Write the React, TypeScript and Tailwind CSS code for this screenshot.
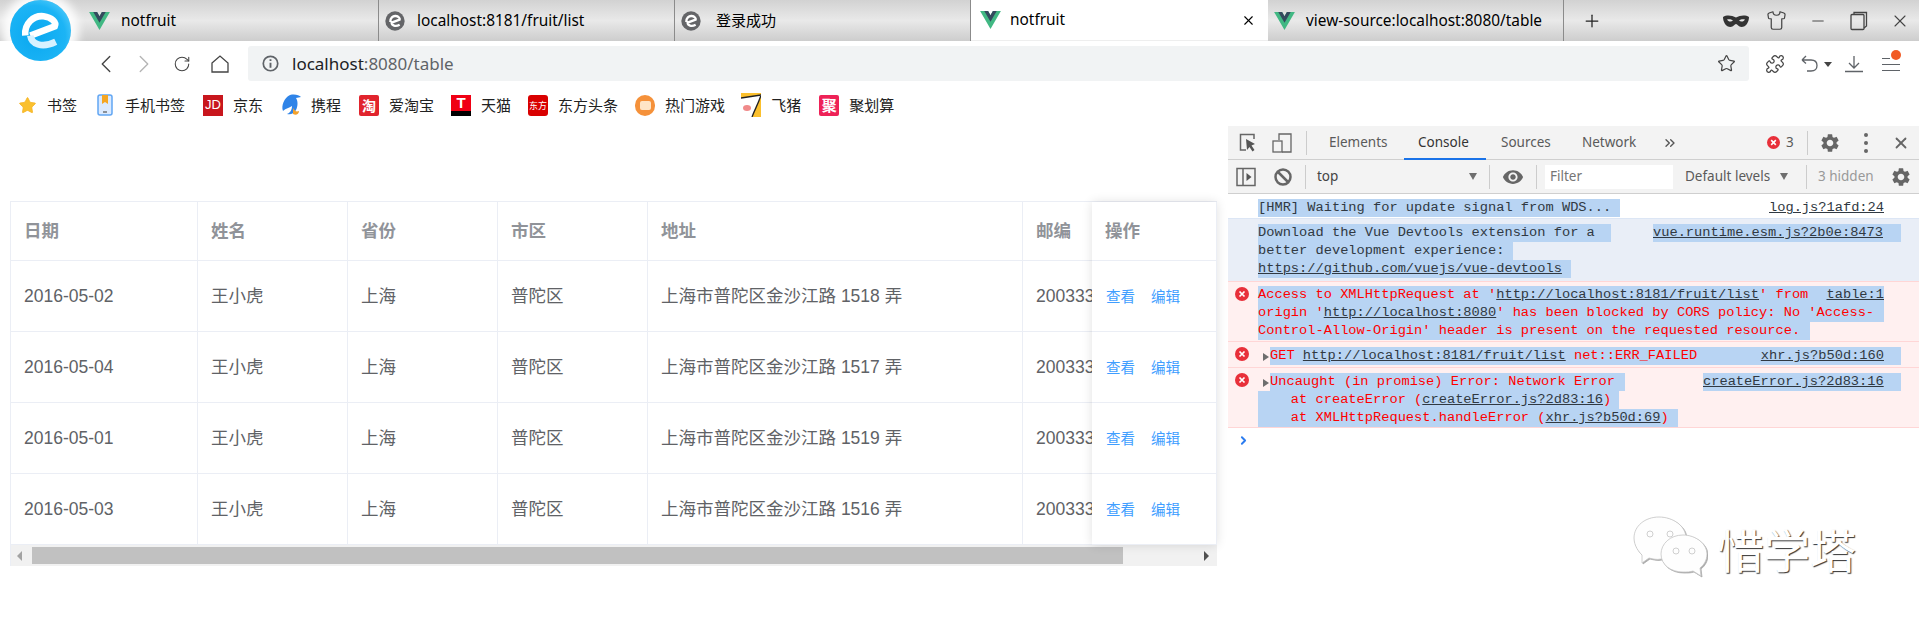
import React from "react";
import { ChevronLeft, ChevronRight, ChevronsRight, Minus, Plus, Puzzle, RotateCw, Shirt, Star, X } from "lucide-react";
import { MdSettings, MdVisibility } from "react-icons/md";

const Vue = () => (
  <svg viewBox="0 0 261.76 226.69" className="w-[21px] h-[18px] shrink-0">
    <path d="M161.096.001l-30.225 52.351L100.647.001H-.005l130.877 226.688L261.749.001z" fill="#41b883" />
    <path d="M161.096.001l-30.225 52.351L100.647.001H52.346l78.526 136.01L209.398.001z" fill="#34495e" />
  </svg>
);

const SmallE = () => (
  <svg viewBox="0 0 60 60" className="w-[20px] h-[20px] shrink-0">
    <circle cx="30" cy="30" r="29" fill="#646568" />
    <path d="M16 33C15 21 24 14 32 15C41 16 45 22 44 26L20 35C20 43 31 48 44 41" fill="none" stroke="#fff" strokeWidth="7" />
  </svg>
);

function Tab({ icon, label, active, cjk }: { icon: React.ReactNode; label: string; active?: boolean; cjk?: boolean }) {
  return (
    <div className={active ? "flex items-center w-[297px] h-[41px] pl-[9px] bg-white border-b border-[#eeeeee]" : "flex items-center w-[296px] h-[41px] pl-[6px] border-r border-[#8b8b8b]"}>
      <span className="w-[20px] flex justify-center">{icon}</span>
      <span className={cjk ? "ml-[15px] text-[15px] text-black" : active ? "ml-[10px] text-[15.4px] text-black" : "ml-[12px] text-[15.4px] text-black"}>{label}</span>
      {active && <X className="ml-auto mr-[12px] w-[15px] h-[15px] text-black" strokeWidth={1.8} />}
    </div>
  );
}

const Mask = () => (
  <svg viewBox="0 0 26 12" className="w-[26px] h-[12px]">
    <path fillRule="evenodd" d="M0 2C4 -.5 9 .5 13 2.5C17 .5 22 -.5 26 2C26 7 23 12 18.5 12C15.500 12 14.500 9 13 9C11.500 9 10.500 12 7.500 12C3 12 0 7 0 2ZM4 4.500C5 6.500 8 7.500 10 5.500C8 4 6 4 4 4.500ZM22 4.500C21 6.500 18 7.500 16 5.500C18 4 20 4 22 4.500Z" fill="#333" />
  </svg>
);

const Restore = () => (
  <svg viewBox="0 0 18 20" className="w-[18px] h-[20px]" fill="none" stroke="#444" strokeWidth="1.3">
    <path d="M4 3V1.500H16.500V15L14 17" />
    <rect x="1" y="3.500" width="13" height="15" rx="1" />
  </svg>
);

function ChromeButton({ children, wide }: { children: React.ReactNode; wide?: boolean }) {
  return <div className={wide ? "flex items-center justify-center w-[56px] h-[41px]" : "flex items-center justify-center w-[41px] h-[41px]"}>{children}</div>;
}

function NavButton({ children }: { children: React.ReactNode }) {
  return <div className="flex items-center justify-center w-[38px] h-[46px]">{children}</div>;
}

const Info = () => (
  <svg viewBox="0 0 20 20" className="w-[17px] h-[17px] shrink-0" fill="none">
    <circle cx="10" cy="10" r="8.500" stroke="#5f6368" strokeWidth="2" />
    <path d="M10 9V15M10 5V7" stroke="#5f6368" strokeWidth="2.200" />
  </svg>
);

const HomeIcon = () => (
  <svg viewBox="0 0 18 18" className="w-[18px] h-[18px]" fill="none" stroke="#444" strokeWidth="1.300">
    <path d="M1 8L9 1L17 8V17H1Z" />
  </svg>
);

const Undo = () => (
  <svg viewBox="0 0 18 18" className="w-[18px] h-[18px]" fill="none" stroke="#5f6368" strokeWidth="1.300">
    <path d="M1 5H10C14 5 16 7.500 16 10.500C16 14 13.500 16 10 16H6M1 5L5 1M1 5L5 8.500" />
  </svg>
);

const Download = () => (
  <svg viewBox="0 0 18 18" className="w-[18px] h-[18px]" fill="none" stroke="#5f6368" strokeWidth="1.300">
    <path d="M9 1V13M4 8L9 13L14 8M0 16.500H18" />
  </svg>
);

const Hamburger = () => (
  <div className="relative w-[18px] h-[18px]">
    <svg viewBox="0 0 18 18" className="w-[18px] h-[18px]" stroke="#5f6368" strokeWidth="1.200">
      <path d="M0 3.500H8M0 9.500H18M0 15.500H18" />
    </svg>
    <span className="absolute top-[-5px] right-[-1px] w-[10px] h-[10px] rounded-full bg-[#f15a24]" />
  </div>
);

const Dolphin = () => (
  <svg viewBox="0 0 20 22" className="w-[20px] h-[22px]">
    <path d="M9 1C14 0 18 1 20 3L15 4C17 7 17 12 15 16C13 20 9 21 6 20C9 19 11 16 11 12C8 14 5 14 2 17C0 12 3 4 9 1Z" fill="#2f84e8" />
    <path d="M12 14C14 17 15 18 18 17C18 20 15 22 12 20Z" fill="#f2a12c" />
  </svg>
);

const Phone = () => (
  <svg viewBox="0 0 16 22" className="w-[16px] h-[22px]">
    <rect x="1" y="1" width="14" height="20" rx="2" fill="#dbeaff" stroke="#62a6f3" strokeWidth="1.500" />
    <path d="M5 1H11V10L8 8L5 10Z" fill="#f5a623" />
    <path d="M6 18H10" stroke="#555" strokeWidth="1.200" />
  </svg>
);

const Pig = () => (
  <svg viewBox="0 0 20 24" className="w-[20px] h-[24px]">
    <rect width="20" height="24" fill="#fbc02d" />
    <path d="M0 5L20 2C18 9 14 16 11 24H0Z" fill="#fff" />
    <path d="M0 5L20 2C18 9 14 16 11 24" fill="none" stroke="#222" strokeWidth="1.300" />
    <ellipse cx="6" cy="15" rx="4" ry="3" fill="#f08a8a" />
  </svg>
);

const bookmarkIcons: [React.ReactNode, string, string][] = [
  [<Star className="w-[19px] h-[19px] text-[#f5b324] fill-[#fac02e]" strokeWidth={1} />, "书签", ""],
  [<Phone />, "手机书签", ""],
  [<span className="flex items-center justify-center w-[20px] h-[21px] bg-[#c8161d] text-white text-[13px] [font-family:'Liberation_Sans',sans-serif]">JD</span>, "京东", ""],
  [<Dolphin />, "携程", ""],
  [<span className="flex items-center justify-center w-[20px] h-[21px] rounded-[2px] bg-[#e1242d] text-white text-[14px] font-bold">淘</span>, "爱淘宝", ""],
  [<span className="flex items-start justify-center w-[20px] h-[21px] bg-[#f00014] border-b-[5px] border-black text-white text-[15px] leading-[15px] font-bold [font-family:'Liberation_Sans',sans-serif]">T</span>, "天猫", "ml-[-1px]"],
  [<span className="flex items-center justify-center w-[20px] h-[21px] rounded-[3px] bg-[#d90000] text-white text-[9px] leading-none">东方</span>, "东方头条", "ml-[-1px]"],
  [<span className="flex items-center justify-center w-[21px] h-[21px] rounded-full bg-[#f5913a]"><span className="w-[11px] h-[9px] rounded-[2px] bg-[#ffe5c6]" /></span>, "热门游戏", "ml-[-1px]"],
  [<Pig />, "飞猪", "ml-[-2px]"],
  [<span className="flex items-center justify-center w-[20px] h-[21px] rounded-[2px] bg-[#ee2257] text-white text-[15px] font-bold leading-none">聚</span>, "聚划算", ""],
];

const rows = [
  ["2016-05-02", "1518"],
  ["2016-05-04", "1517"],
  ["2016-05-01", "1519"],
  ["2016-05-03", "1516"],
];

const cellBase = "flex items-center h-full pl-[13px] pt-px border-r border-[#ebeef5] whitespace-nowrap overflow-hidden";

function Table() {
  return (
    <div className="relative w-[1207px] border-t border-l border-[#ebeef5] [font-family:'Liberation_Sans','Noto_Sans_CJK_SC',sans-serif] text-[17.500px] text-[#606266]">
      <div className="flex h-[59px] border-b border-[#ebeef5] font-bold text-[#909399]">
        <div className={cellBase + " w-[187px]"}>日期</div>
        <div className={cellBase + " w-[150px]"}>姓名</div>
        <div className={cellBase + " w-[150px]"}>省份</div>
        <div className={cellBase + " w-[150px]"}>市区</div>
        <div className={cellBase + " w-[375px]"}>地址</div>
        <div className={cellBase + " flex-1"}>邮编</div>
      </div>
      {rows.map(([date, lane]) => (
        <div key={date} className="flex h-[71px] border-b border-[#ebeef5]">
          <div className={cellBase + " w-[187px]"}>{date}</div>
          <div className={cellBase + " w-[150px]"}>王小虎</div>
          <div className={cellBase + " w-[150px]"}>上海</div>
          <div className={cellBase + " w-[150px]"}>普陀区</div>
          <div className={cellBase + " w-[375px]"}>上海市普陀区金沙江路 {lane} 弄</div>
          <div className={cellBase + " flex-1"}>200333</div>
        </div>
      ))}
      <div className="flex items-center h-[21px] bg-[#f1f1f1]">
        <span className="ml-[6px] w-0 h-0 border-y-[5px] border-y-transparent border-r-[5px] border-r-[#a3a3a3]" />
        <div className="ml-[10px] w-[1091px] h-[17px] bg-[#c1c1c1]" />
        <span className="ml-auto mr-[8px] w-0 h-0 border-y-[5px] border-y-transparent border-l-[5px] border-l-[#505050]" />
      </div>
      <div className="absolute top-0 right-0 w-[125px] h-[343px] bg-white border-r border-[#ebeef5] shadow-[0_0_10px_rgba(0,0,0,0.12)]">
        <div className="flex items-center h-[59px] pl-[13px] pt-px border-b border-[#ebeef5] font-bold text-[#909399]">操作</div>
        {rows.map(([date]) => (
          <div key={date} className="flex items-center h-[71px] pl-[14px] pt-[3px] gap-[16px] border-b border-[#ebeef5] text-[14.500px] text-[#409eff]">
            <span>查看</span>
            <span>编辑</span>
          </div>
        ))}
      </div>
    </div>
  );
}

const ErrorDot = ({ small }: { small?: boolean }) => (
  <svg viewBox="0 0 14 14" className={small ? "w-[13px] h-[13px] shrink-0" : "w-[14px] h-[14px] shrink-0"}>
    <circle cx="7" cy="7" r="7" fill="#e8303a" />
    <path d="M4.500 4.500L9.500 9.500M9.500 4.500L4.500 9.500" stroke="#fff" strokeWidth="1.700" />
  </svg>
);

const Inspect = () => (
  <svg viewBox="0 0 18 20" className="w-[18px] h-[20px]" fill="none">
    <path d="M7 17H1.500V1.500H15V6" stroke="#666" strokeWidth="1.500" />
    <path d="M7 6L16 11L12.500 12.500L15.500 17L13.500 18.500L10.500 14L8 17Z" fill="#555" />
  </svg>
);

const Device = () => (
  <svg viewBox="0 0 20 20" className="w-[20px] h-[20px]" fill="none" stroke="#666" strokeWidth="1.300">
    <path d="M7 7V1H19V19H10" />
    <rect x="1" y="8" width="9" height="11" />
  </svg>
);

const SideToggle = () => (
  <svg viewBox="0 0 20 20" className="w-[20px] h-[20px]" fill="none">
    <rect x="1" y="1.500" width="18" height="17" stroke="#666" strokeWidth="1.500" />
    <path d="M7 1.500V18.500" stroke="#666" strokeWidth="1.500" />
    <path d="M10.500 6L15.500 10L10.500 14Z" fill="#555" />
  </svg>
);

const Ban = () => (
  <svg viewBox="0 0 18 18" className="w-[18px] h-[18px]" fill="none" stroke="#666" strokeWidth="2.500">
    <circle cx="9" cy="9" r="7.500" />
    <path d="M4 4L14 14" />
  </svg>
);

const Sep = ({ className }: { className: string }) => <span className={"w-px h-[24px] bg-[#cccccc] shrink-0 " + className} />;

const hl = "bg-[#b8d4f3]";

function MonoLine({ children, w, right }: { children?: React.ReactNode; w: string; right?: React.ReactNode }) {
  return (
    <div className="flex h-[18px] leading-[18px] whitespace-pre">
      <div className={hl + " " + w}>{children}</div>
      {right && <div className="ml-auto text-[#303942] underline">{right}</div>}
    </div>
  );
}

const Lk = ({ children }: { children: React.ReactNode }) => <span className="underline text-[#303942]">{children}</span>;

const Arrow = () => <span className="absolute left-[5px] top-[5px] w-0 h-0 border-y-[4px] border-y-transparent border-l-[6px] border-l-[#6e6e6e]" />;

const tabText = "shrink-0 whitespace-nowrap";

function Console() {
  return (
    <div className="w-[691px] shrink-0 [font-family:'Liberation_Mono',monospace] text-[13.700px]">
      <div className="flex h-[68px] flex-col bg-[#f3f3f3] border-b border-[#cfcfcf] [font-family:'Noto_Sans',sans-serif] text-[13.500px] text-[#5a5a5a]">
        <div className="flex items-center h-[34px] border-b border-[#cfcfcf] relative">
          <span className="ml-[11px]"><Inspect /></span>
          <span className="ml-[15px]"><Device /></span>
          <Sep className="ml-[14px]" />
          <span className={tabText + " ml-[22px] w-[59px]"}>Elements</span>
          <span className={tabText + " ml-[30px] w-[53px] text-[#333]"}>Console</span>
          <span className={tabText + " ml-[30px] w-[51px]"}>Sources</span>
          <span className={tabText + " ml-[30px] w-[56px]"}>Network</span>
          <ChevronsRight className="ml-[24px] w-[16px] h-[16px] text-[#555]" strokeWidth={2} />
          <span className="ml-[89px]"><ErrorDot small /></span>
          <span className="ml-[6px] w-[8px]">3</span>
          <Sep className="ml-[13px]" />
          <MdSettings className="ml-[11px] w-[22px] h-[22px] text-[#666]" />
          <span className="ml-[23px] flex flex-col gap-[4px]">
            <i className="block w-[4px] h-[4px] rounded-full bg-[#666]" />
            <i className="block w-[4px] h-[4px] rounded-full bg-[#666]" />
            <i className="block w-[4px] h-[4px] rounded-full bg-[#666]" />
          </span>
          <X className="ml-[24px] w-[18px] h-[18px] text-[#666]" strokeWidth={2.400} />
          <span className="absolute left-[176px] bottom-[-1px] w-[82px] h-[2px] bg-[#1a73e8]" />
        </div>
        <div className="flex items-center h-[33px]">
          <span className="ml-[8px]"><SideToggle /></span>
          <span className="ml-[18px]"><Ban /></span>
          <Sep className="ml-[13px]" />
          <span className="ml-[11px] w-[24px] text-[#444]">top</span>
          <span className="ml-[128px] w-0 h-0 border-x-[4px] border-x-transparent border-t-[7px] border-t-[#6e6e6e]" />
          <Sep className="ml-[12px]" />
          <MdVisibility className="ml-[12px] w-[22px] h-[22px] text-[#666]" />
          <Sep className="ml-[12px]" />
          <span className="ml-[8px] flex items-center w-[128px] h-[24px] pl-[5px] bg-white text-[#757575]">Filter</span>
          <span className={tabText + " ml-[12px] w-[88px]"}>Default levels</span>
          <span className="ml-[7px] w-0 h-0 border-x-[4px] border-x-transparent border-t-[7px] border-t-[#6e6e6e]" />
          <Sep className="ml-[18px]" />
          <span className={tabText + " ml-[11px] w-[58px] text-[#999]"}>3 hidden</span>
          <MdSettings className="ml-[14px] w-[22px] h-[22px] text-[#666]" />
        </div>
      </div>

      <div className="h-[25px] pt-[5px] pl-[30px] pr-[35px] border-b border-[#dce6f5] text-[#303942]">
        <MonoLine w="w-[362px]" right="log.js?1afd:24">[HMR] Waiting for update signal from WDS...</MonoLine>
      </div>

      <div className="h-[62px] pt-[5px] pl-[30px] pr-[18px] bg-[#e9eef7] text-[#303942]">
        <div className="flex h-[18px] leading-[18px] whitespace-pre">
          <div className={hl + " w-[353px]"}>Download the Vue Devtools extension for a</div>
          <div className={hl + " ml-auto w-[248px] underline"}>vue.runtime.esm.js?2b0e:8473</div>
        </div>
        <MonoLine w="w-[255px]">better development experience:</MonoLine>
        <MonoLine w="w-[313px]"><Lk>https://github.com/vuejs/vue-devtools</Lk></MonoLine>
      </div>

      <div className="relative h-[61px] pt-[4px] pl-[30px] bg-[#fff0f0] border-y border-[#ffd6d6] text-[#ff0000]">
        <span className="absolute left-[7px] top-[5px]"><ErrorDot /></span>
        <div className={"flex justify-between h-[18px] leading-[18px] whitespace-pre w-[626px] " + hl}>
          <span>Access to XMLHttpRequest at '<Lk>http://localhost:8181/fruit/list</Lk>' from </span>
          <Lk>table:1</Lk>
        </div>
        <MonoLine w="w-[626px]">origin '<Lk>http://localhost:8080</Lk>' has been blocked by CORS policy: No 'Access-</MonoLine>
        <MonoLine w="w-[552px]">Control-Allow-Origin' header is present on the requested resource.</MonoLine>
      </div>

      <div className="relative h-[26px] pt-[5px] pl-[42px] pr-[18px] bg-[#fff0f0] border-b border-[#ffd6d6] text-[#ff0000]">
        <span className="absolute left-[7px] top-[5px]"><ErrorDot /></span>
        <span className="absolute left-[30px] top-[6px]"><Arrow /></span>
        <div className={"flex justify-between h-[18px] leading-[18px] whitespace-pre pr-[17px] " + hl}>
          <span>GET <Lk>http://localhost:8181/fruit/list</Lk> net::ERR_FAILED</span>
          <Lk>xhr.js?b50d:160</Lk>
        </div>
      </div>

      <div className="relative h-[60px] pt-[5px] pl-[30px] pr-[18px] bg-[#fff0f0] border-b border-[#ffd6d6] text-[#ff0000]">
        <span className="absolute left-[7px] top-[5px]"><ErrorDot /></span>
        <span className="absolute left-[30px] top-[6px]"><Arrow /></span>
        <div className="flex h-[18px] leading-[18px] whitespace-pre">
          <div className={hl + " w-[355px] ml-[12px]"}>Uncaught (in promise) Error: Network Error</div>
          <div className={hl + " ml-auto w-[198px] underline text-[#303942]"}>createError.js?2d83:16</div>
        </div>
        <MonoLine w="w-[361px]">{"    at createError ("}<Lk>createError.js?2d83:16</Lk>)</MonoLine>
        <MonoLine w="w-[420px]">{"    at XMLHttpRequest.handleError ("}<Lk>xhr.js?b50d:69</Lk>)</MonoLine>
      </div>

      <div className="relative pl-[9px] pt-[6px]">
        <ChevronRight className="w-[13px] h-[13px] text-[#2b7cf0]" strokeWidth={3.500} />
        <div className="absolute left-[405px] top-[88px] flex items-center">
          <svg viewBox="0 0 74 64" className="w-[74px] h-[64px] drop-shadow-[1px_1px_0_#aaaaaa]" fill="#fefefe" stroke="#c4c4c4" strokeWidth="0.800">
            <path d="M26 1C12 1 1 10 1 22C1 30 6 36 9 39L9 47L16 42C20 43 24 44 28 43C42 44 53 33 53 22C53 10 40 1 26 1Z" />
            <path d="M50 19C37 19 28 28 28 38C28 49 38 56 50 56C54 56 57 56 60 55L68 60L67 52C71 49 74 44 74 38C74 28 63 19 50 19Z" />
            <circle cx="17" cy="18" r="3" />
            <circle cx="37" cy="18" r="3" />
            <circle cx="43" cy="35" r="3" />
            <circle cx="59" cy="35" r="3" />
          </svg>
          <span className="ml-[11px] text-[46px] leading-none text-white [font-family:'Noto_Sans_CJK_SC',sans-serif] [text-shadow:1px_1px_1px_#333333]">惜学塔</span>
        </div>
      </div>
    </div>
  );
}

export default function App() {
  return (
    <div className="relative w-[1919px] h-[635px] overflow-hidden bg-white [font-family:'Noto_Sans','Noto_Sans_CJK_SC',sans-serif]">
      <div className="absolute left-[10px] top-0 w-[61px] h-[61px] rounded-full shadow-[0_0_8px_8px_rgba(255,255,255,0.9)] bg-[radial-gradient(circle_at_40%_60%,#0aa8f0,#1cb4f5_60%,#7adcff)]">
        <svg viewBox="0 0 60 60" className="w-[61px] h-[61px]">
          <path d="M15 35C14 23 23 15 33 16C41 17 46 22 44 26L20 35" fill="none" stroke="#ffffff" strokeWidth="6.500" />
          <path d="M20 35C21 43 31 48 45 41" fill="none" stroke="#d6f1ff" strokeWidth="6.500" />
        </svg>
      </div>

      <div className="flex h-[41px] bg-[linear-gradient(#d2d2d2,#e9e9e9_50%,#cdcdcd)]">
        <div className="w-[83px] shrink-0" />
        <Tab icon={<Vue />} label="notfruit" />
        <Tab icon={<SmallE />} label="localhost:8181/fruit/list" />
        <Tab icon={<SmallE />} label="登录成功" cjk />
        <Tab icon={<Vue />} label="notfruit" active />
        <Tab icon={<Vue />} label="view-source:localhost:8080/table" />
        <ChromeButton wide><Plus className="w-[20px] h-[20px] text-[#222]" strokeWidth={1.500} /></ChromeButton>
        <div className="ml-auto mr-[-1px] flex">
          <ChromeButton><Mask /></ChromeButton>
          <ChromeButton><Shirt className="w-[21px] h-[21px] text-[#444]" strokeWidth={1.400} /></ChromeButton>
          <ChromeButton><Minus className="w-[18px] h-[18px] text-[#444]" strokeWidth={1.300} /></ChromeButton>
          <ChromeButton><Restore /></ChromeButton>
          <ChromeButton><X className="w-[20px] h-[20px] text-[#444]" strokeWidth={1.300} /></ChromeButton>
        </div>
      </div>

      <div className="flex h-[46px] pl-[87px]">
        <NavButton><ChevronLeft className="w-[30px] h-[30px] text-[#444]" strokeWidth={1.100} /></NavButton>
        <NavButton><ChevronRight className="w-[30px] h-[30px] text-[#b5b5b5]" strokeWidth={1.100} /></NavButton>
        <NavButton><RotateCw className="w-[18px] h-[18px] text-[#444]" strokeWidth={1.400} /></NavButton>
        <NavButton><HomeIcon /></NavButton>
        <div className="ml-[9px] mt-[5px] flex items-center w-[1501px] h-[35px] rounded-[3px] bg-[#f1f3f4] pl-[14px]">
          <Info />
          <span className="ml-[13px] text-[17px] text-[#202124]">localhost<span className="text-[#5f6368]">:8080/table</span></span>
          <Star className="ml-auto mr-[13px] w-[19px] h-[19px] text-[#444]" strokeWidth={1.500} />
        </div>
        <div className="flex items-center">
          <Puzzle className="ml-[16px] w-[20px] h-[20px] text-[#444]" strokeWidth={1.500} />
          <span className="ml-[16px]"><Undo /></span>
          <span className="ml-[5px] w-0 h-0 border-x-[4px] border-x-transparent border-t-[5px] border-t-[#444]" />
          <span className="ml-[13px]"><Download /></span>
          <span className="ml-[19px]"><Hamburger /></span>
        </div>
      </div>

      <div className="flex items-center h-[36px] pl-[17px] gap-[18px] text-[15px] text-[#222]">
        {bookmarkIcons.map(([icon, label, shift]) => (
          <div key={label} className={"flex items-center " + shift}>
            <span className="flex items-center justify-center w-[20px]">{icon}</span>
            <span className="ml-[10px]">{label}</span>
          </div>
        ))}
      </div>

      <div className="flex pt-[3px]">
        <div className="w-[1228px] shrink-0 pl-[10px] pt-[75px]">
          <Table />
        </div>
        <Console />
      </div>
    </div>
  );
}
